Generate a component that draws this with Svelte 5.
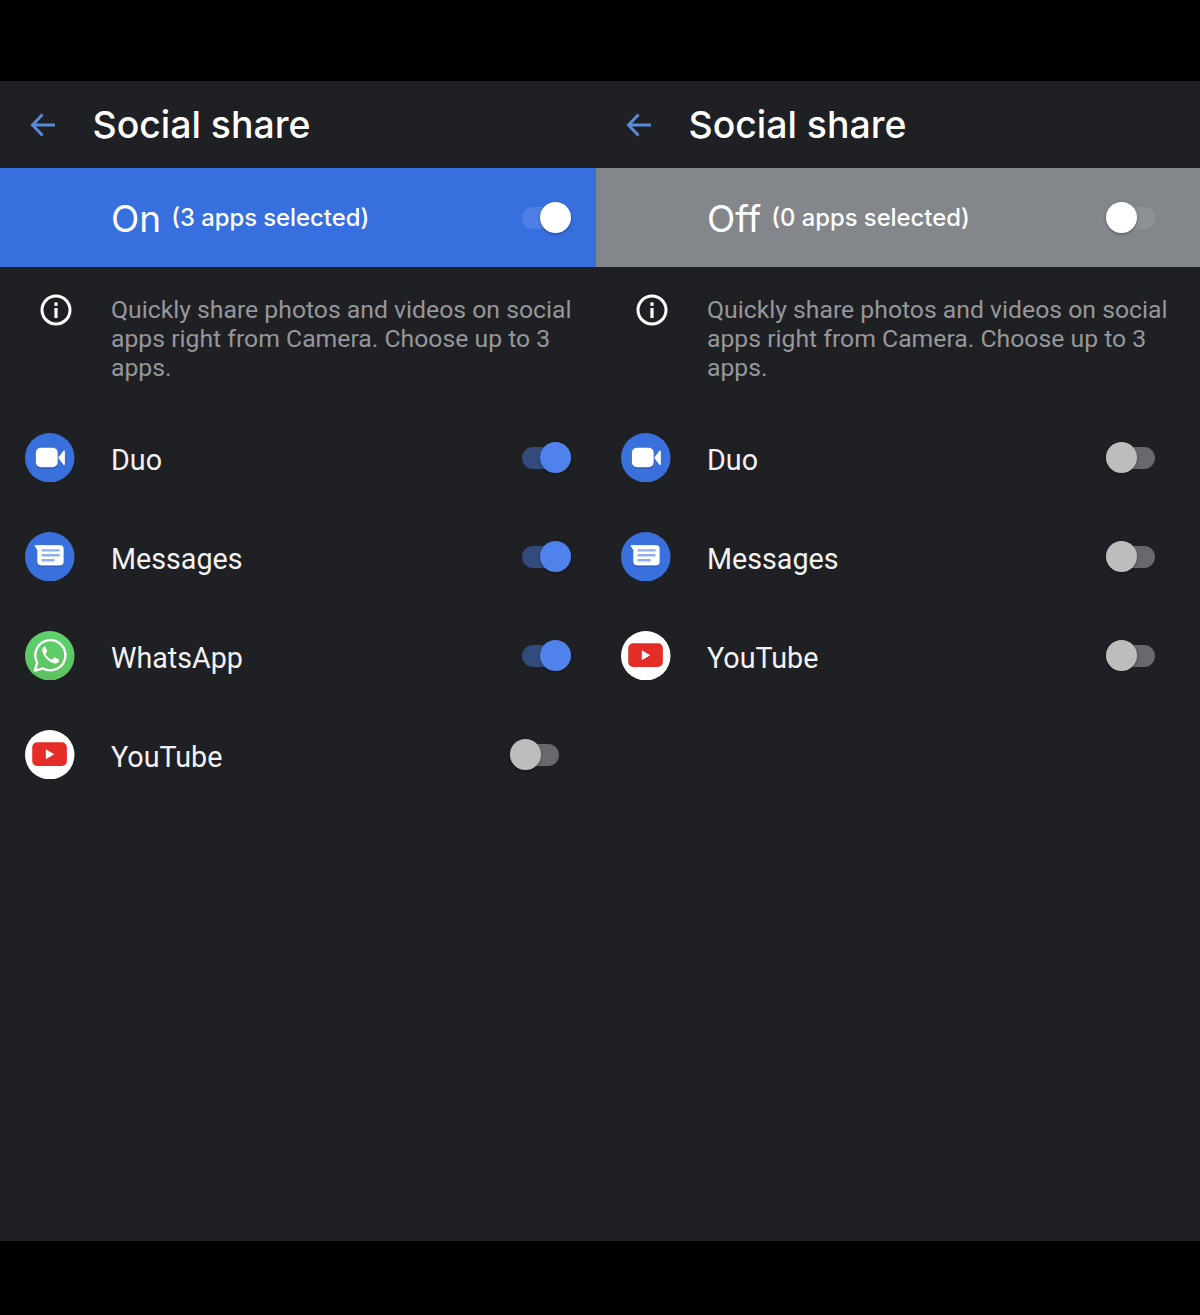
<script>
  const description = 'Quickly share photos and videos on social apps right from Camera. Choose up to 3 apps.';

  const panels = [
    {
      on: true,
      count: 3,
      apps: [
        { name: 'Duo', icon: 'duo', on: true },
        { name: 'Messages', icon: 'messages', on: true },
        { name: 'WhatsApp', icon: 'whatsapp', on: true },
        { name: 'YouTube', icon: 'youtube', on: false }
      ]
    },
    {
      on: false,
      count: 0,
      apps: [
        { name: 'Duo', icon: 'duo', on: false },
        { name: 'Messages', icon: 'messages', on: false },
        { name: 'YouTube', icon: 'youtube', on: false }
      ]
    }
  ];
</script>

<div class="screen">
  <div class="panels">
    {#each panels as panel}
      <section class="panel">
        <header class="head">
          <svg class="back" viewBox="0 0 26 24" width="26" height="24">
            <path d="M25 12H2.5M12.5 1.5 2.5 12l10 10.5" fill="none" stroke="#5b8ad6" stroke-width="3" />
          </svg>
          <h1>Social share</h1>
        </header>

        <div class={['banner', { on: panel.on }]}>
          <div class="banner-row">
            <div class="status">
              <span class="state">{panel.on ? 'On' : 'Off'}</span>
              <span class="count">({panel.count} apps selected)</span>
            </div>
            <div class={['slot', { on: panel.on }]}>
              <div class={['toggle', 'light', { on: panel.on }]}><span class="thumb"></span></div>
            </div>
          </div>
        </div>

        <div class="info">
          <svg class="info-icon" viewBox="0 0 32 32" width="32" height="32">
            <circle cx="16" cy="16" r="14" fill="none" stroke="#fff" stroke-width="3" />
            <rect x="14.4" y="14" width="3.2" height="10" fill="#fff" />
            <rect x="14.4" y="8.4" width="3.2" height="3.4" fill="#fff" />
          </svg>
          <p>{description}</p>
        </div>

        <ul class="apps">
          {#each panel.apps as app}
            <li class="app">
              {#if app.icon === 'duo'}
                <svg class="logo" viewBox="0 0 50 50">
                  <circle cx="25" cy="25" r="25" fill="#3a70dc" />
                  <rect x="11" y="16" width="22" height="20" rx="5" fill="#2a58b8" />
                  <rect x="11" y="15" width="22" height="19.5" rx="5" fill="#fff" />
                  <path d="M34.5 25 39.5 18.5v13z" fill="#fff" stroke="#fff" stroke-width="1.5" stroke-linejoin="round" />
                </svg>
              {:else if app.icon === 'messages'}
                <svg class="logo" viewBox="0 0 50 50">
                  <circle cx="25" cy="25" r="25" fill="#3a70dc" />
                  <path d="M10 15h26a2.5 2.5 0 0 1 2.5 2.5v15a2.5 2.5 0 0 1-2.5 2.5H16a3 3 0 0 1-3-3V20z" fill="#2a58b8" />
                  <path d="M10 13.8h26a2.5 2.5 0 0 1 2.5 2.5v14.5a2.5 2.5 0 0 1-2.5 2.5H16a3 3 0 0 1-3-3V18.5z" fill="#fff" stroke="#fff" stroke-linejoin="round" />
                  <path d="M16.7 18.5H35M16.7 23.5H35M16.7 28.5H30" stroke="#8fb0ea" stroke-width="2.4" />
                </svg>
              {:else if app.icon === 'whatsapp'}
                <svg class="logo" viewBox="0 0 50 50">
                  <defs>
                    <linearGradient id="wa" x1="0" y1="0" x2="0" y2="1">
                      <stop offset="0" stop-color="#5fd16c" />
                      <stop offset="1" stop-color="#5cc25f" />
                    </linearGradient>
                  </defs>
                  <circle cx="25" cy="25" r="25" fill="url(#wa)" />
                  <path d="M10 40l2.3-8.2A15.2 15.2 0 1 1 18.3 37.8z" fill="none" stroke="#fff" stroke-width="2.4" stroke-linejoin="round" />
                  <path d="M19.6 15.6c-1.6 1-2.5 2.9-2 5 1.2 5 6 10.3 11.5 12 2.3.6 4.3-.3 5.2-2.1.3-.7.3-1.3 0-1.6l-4-2.2c-.5-.2-.9 0-1.2.4l-1.3 1.5c-.3.3-.7.4-1.1.2-2.5-1.1-4.6-3-5.9-5.4-.2-.4-.1-.7.2-1l1.1-1.3c.3-.4.3-.8.2-1.2l-1.7-4c-.3-.7-.9-.8-1-.3z" fill="#fff" />
                </svg>
              {:else}
                <svg class="logo" viewBox="0 0 50 50">
                  <circle cx="25" cy="25" r="25" fill="#fff" />
                  <rect x="7.3" y="12.4" width="35" height="24" rx="5" fill="#e52d27" />
                  <path d="M21 19.5v10l8.5-5z" fill="#fff" />
                </svg>
              {/if}
              <span class="name">{app.name}</span>
              <div class={['slot', { on: app.on }]}>
                <div class={['toggle', { on: app.on }]}><span class="thumb"></span></div>
              </div>
            </li>
          {/each}
        </ul>
      </section>
    {/each}
  </div>
</div>

<style>
  :global(body) {
    margin: 0;
    background: #000;
  }

  .screen {
    height: 1315px;
    padding: 81px 0 74px;
    box-sizing: border-box;
    font-family: Roboto, sans-serif;
  }

  .panels {
    display: grid;
    grid-template-columns: 596px 604px;
    height: 100%;
    background: #1f2024;
  }

  .head {
    height: 87px;
    display: flex;
    align-items: center;
    padding-left: 30px;
    gap: 36.5px;
  }

  .back {
    flex: none;
  }

  h1 {
    margin: 0;
    color: #fff;
    font-family: Inter, sans-serif;
    font-size: 37.4px;
    font-weight: 500;
    line-height: 87px;
  }

  .banner {
    height: 99px;
    background: #83868a;
    color: #fff;
  }

  .banner.on {
    background: #376fdf;
  }

  .banner-row {
    width: 596px;
    height: 100%;
    display: flex;
    align-items: center;
  }

  .status {
    display: flex;
    align-items: center;
    gap: 10px;
    flex: 1;
    margin-left: 111px;
    font-family: Inter, sans-serif;
  }

  .state {
    font-size: 37px;
    padding-top: 1px;
  }

  .count {
    font-size: 23.8px;
    font-weight: 500;
  }

  .slot {
    width: 61px;
    display: flex;
    justify-content: flex-start;
    margin-right: 25px;
    flex: none;
  }

  .slot.on {
    justify-content: flex-end;
  }

  .toggle {
    position: relative;
    width: 49px;
    height: 22px;
    border-radius: 11px;
    background: #68696c;
  }

  .toggle.on {
    background: #334a7c;
  }

  .toggle.light {
    background: #8d9094;
  }

  .toggle.light.on {
    background: #4e7fe4;
  }

  .thumb {
    position: absolute;
    top: -4.5px;
    left: 0;
    width: 31px;
    height: 31px;
    border-radius: 50%;
    background: #bdbdbd;
    box-shadow: 0 1px 3px rgba(0, 0, 0, 0.35);
  }

  .toggle.on .thumb {
    left: auto;
    right: 0;
    background: #4f82ea;
  }

  .toggle.light .thumb {
    background: #fff;
  }

  .info {
    display: flex;
    width: 596px;
    box-sizing: border-box;
    padding: 28px 10px 0 39.5px;
    gap: 39.5px;
  }

  .info-icon {
    flex: none;
    margin-top: -1px;
  }

  .info p {
    margin: 0;
    font-size: 24.75px;
    line-height: 29px;
    color: #96979a;
  }

  .apps {
    list-style: none;
    margin: 0;
    padding: 26px 0 0;
    width: 596px;
  }

  .app {
    height: 99px;
    display: flex;
    align-items: center;
    padding-left: 25px;
  }

  .logo {
    width: 49.5px;
    height: 49.5px;
    flex: none;
  }

  .name {
    flex: 1;
    margin-left: 36.5px;
    padding-top: 5px;
    font-size: 28.7px;
    color: #f2f2f3;
  }
</style>
